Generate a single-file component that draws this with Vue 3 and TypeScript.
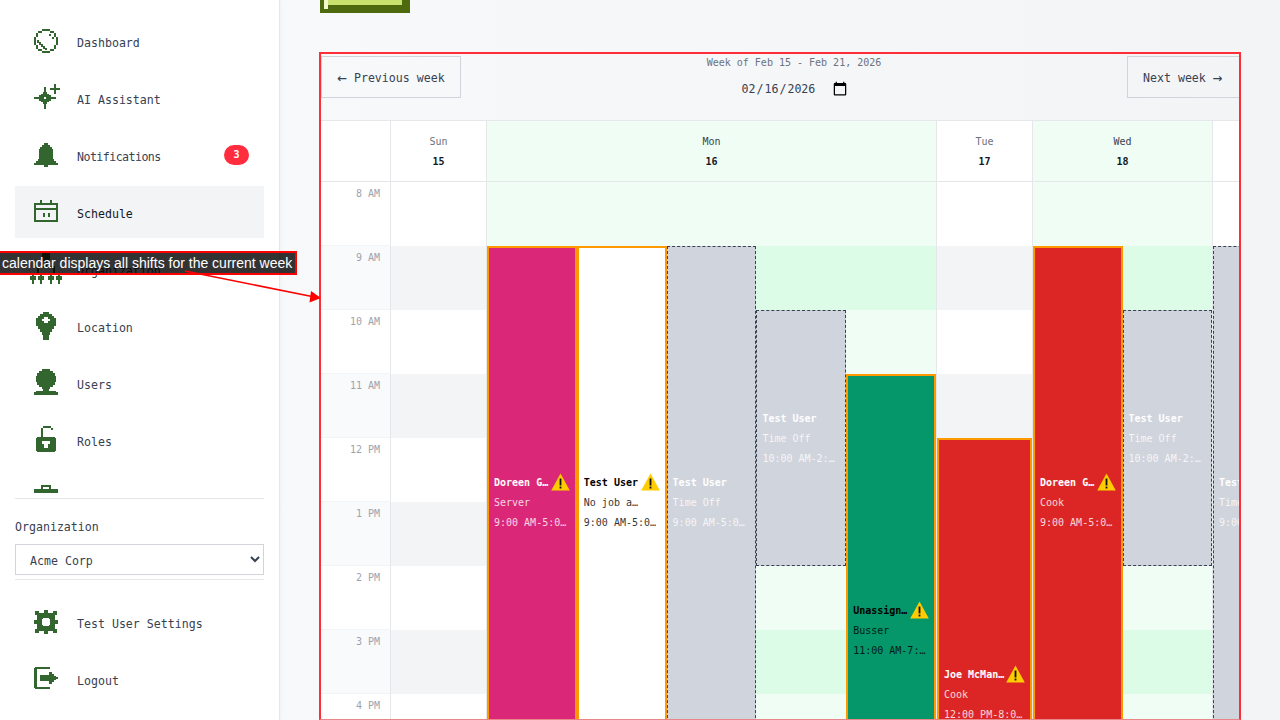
<script setup lang="ts">
type NavItem = { label: string; icon: string; badge?: number; active?: boolean; tight?: boolean }
type Shift = { name: string; role: string; time: string; kind: string; lane: number; start: number; hours: number; warn?: boolean }
type Day = { short: string; date: number; width: number; lanes: number; today?: boolean; shifts: Shift[] }

const club = (x: number) => `M${x} 19h2v-2h2v2h2v4h-2v4h-2v-4h-2z`

const icons: Record<string, string> = {
  dashboard:
    'M8 0h8v2h4v2h2v4h2v8h-2v4h-2v2h-4v2H8v-2H4v-2H2v-4H0V8h2V4h2V2h4z M8 2H16V4H20V8H22V16H20V20H16V22H8V20H4V16H2V8H4V4H8Z M3 11h2v2h2v2h2v2h2v2h2v2h-2v-1H9v-2H7v-2H5v-2H3z M15 5h2v2h-2z M18 8h2v2h-2z',
  ai: 'M10 1h2v5h1v2h2v1h2v2h5v2h-5v2h-2v1h-2v2h-1v5h-2v-5H9v-2H7v-1H5v-2H0v-2h5V9h2V8h2V6h1z M10 11h2v2h-2z M20 -2h2v4h4v2h-4v4h-2V4h-4V2h4z',
  bell: 'M10 0h4v2h2v2h2v2h1v10h1v2h2v2h2v2H0v-2h2v-2h2v-2h1V6h1V4h2V2h2z M10 22h4v2h-4z',
  calendar: 'M0 3h24v19H0z M2 5h20v15H2z M2 8h20v2H2z M6 0h2v3H6z M16 0h2v3h-2z M9 13h2v4H9z M14 13h2v4h-2z',
  org: `M8 -4h8v8H8z M11 4h2v5h-2z M3 9h18v2H3z M3 11h2v5H3z M19 11h2v5h-2z ${club(-4)} ${club(4)} ${club(14)} ${club(22)}`,
  location: 'M9 -2H15V0H18V2H20V4H22V12H20V15H18V18H16V21H15V26H9V21H8V18H6V15H4V12H2V4H4V2H6V0H9Z M10 3H14V5H16V7H14V9H10V7H8V5H10Z',
  users: 'M8 -2H16V0H19V2H21V5H22V11H21V14H19V16H16V18H8V16H5V14H3V11H2V5H3V2H5V0H8Z M9 18h6v2H9z M2 20H22V21H24V24H0V21H2Z',
  roles: 'M9 -2H17V0H9V9H7V0H9Z M17 0H19V2H17Z M3 9H21V10H22V23H21V24H3V23H2V10H3Z M8 13H16V16H14V20H10V16H8Z',
  case: 'M7 0H17V4H15V2H9V4H7Z M0 4H24V12H0Z',
  gear: 'M5 3H19V5H21V19H19V21H5V19H3V5H5Z M10 0H14V3H10Z M10 21H14V24H10Z M0 10H3V14H0Z M21 10H24V14H21Z M1 1H5V5H1Z M19 1H23V5H19Z M1 19H5V23H1Z M19 19H23V23H19Z M9 8h6v1h1v6h-1v1H9v-1H8V9h1z',
  logout: 'M1 0H16V2H3V20H16V22H1V21H0V1H1Z M6 8H15V14H6Z M15 5H18V7H20V9H22V10H24V12H22V13H20V15H18V17H15Z',
}

const navItems: NavItem[] = [
  { label: 'Dashboard', icon: 'dashboard' },
  { label: 'AI Assistant', icon: 'ai' },
  { label: 'Notifications', icon: 'bell', badge: 3, tight: true },
  { label: 'Schedule', icon: 'calendar', active: true },
  { label: 'Organization', icon: 'org' },
  { label: 'Location', icon: 'location' },
  { label: 'Users', icon: 'users' },
  { label: 'Roles', icon: 'roles' },
  { label: 'Jobs', icon: 'case' },
]

const footerItems: NavItem[] = [
  { label: 'Test User Settings', icon: 'gear' },
  { label: 'Logout', icon: 'logout' },
]

const hours = ['8 AM', '9 AM', '10 AM', '11 AM', '12 PM', '1 PM', '2 PM', '3 PM', '4 PM', '5 PM', '6 PM', '7 PM', '8 PM']

const timeOff = (lane: number, start: number, hrs: number, time: string): Shift => ({
  name: 'Test User',
  role: 'Time Off',
  time,
  kind: 'off',
  lane,
  start,
  hours: hrs,
})

const days: Day[] = [
  { short: 'Sun', date: 15, width: 96, lanes: 1, shifts: [] },
  {
    short: 'Mon',
    date: 16,
    width: 450,
    lanes: 5,
    today: true,
    shifts: [
      { name: 'Doreen Gonzalez', role: 'Server', time: '9:00 AM-5:00 PM', kind: 'pink', lane: 1, start: 1, hours: 8, warn: true },
      { name: 'Test User', role: 'No job assigned', time: '9:00 AM-5:00 PM', kind: 'white', lane: 2, start: 1, hours: 8, warn: true },
      timeOff(3, 1, 8, '9:00 AM-5:00 PM'),
      timeOff(4, 2, 4, '10:00 AM-2:00 PM'),
      { name: 'Unassigned', role: 'Busser', time: '11:00 AM-7:00 PM', kind: 'green', lane: 5, start: 3, hours: 8, warn: true },
    ],
  },
  {
    short: 'Tue',
    date: 17,
    width: 96,
    lanes: 1,
    shifts: [{ name: 'Joe McManus', role: 'Cook', time: '12:00 PM-8:00 PM', kind: 'red', lane: 1, start: 4, hours: 8, warn: true }],
  },
  {
    short: 'Wed',
    date: 18,
    width: 180,
    lanes: 2,
    today: true,
    shifts: [
      { name: 'Doreen Gonzalez', role: 'Cook', time: '9:00 AM-5:00 PM', kind: 'red', lane: 1, start: 1, hours: 8, warn: true },
      timeOff(2, 2, 4, '10:00 AM-2:00 PM'),
    ],
  },
  { short: 'Thu', date: 19, width: 180, lanes: 2, shifts: [timeOff(1, 1, 8, '9:00 AM-5:00 PM')] },
]

const shiftPlace = (s: Shift) => ({
  gridColumn: `${s.lane}`,
  gridRow: `${s.start + 1} / span ${s.hours}`,
})
</script>

<template>
  <div class="page">
    <aside class="sidebar">
      <nav class="nav">
        <a v-for="item in navItems" :key="item.label" class="nav-item" :class="{ active: item.active }">
          <svg class="icon" viewBox="0 0 24 24" shape-rendering="crispEdges">
            <path :d="icons[item.icon]" fill-rule="evenodd" />
          </svg>
          <span class="nav-label" :class="{ tight: item.tight }">{{ item.label }}</span>
          <span v-if="item.badge" class="badge">{{ item.badge }}</span>
        </a>
      </nav>
      <div class="org">
        <label for="org-select">Organization</label>
        <select id="org-select">
          <option>Acme Corp</option>
        </select>
      </div>
      <div class="footer-nav">
        <a v-for="item in footerItems" :key="item.label" class="nav-item">
          <svg class="icon" viewBox="0 0 24 24" shape-rendering="crispEdges">
            <path :d="icons[item.icon]" fill-rule="evenodd" />
          </svg>
          <span class="nav-label">{{ item.label }}</span>
        </a>
      </div>
    </aside>

    <main class="main">
      <div class="pixel-button"><div class="pixel-button__light"><div class="pixel-button__edge"></div></div></div>

      <section class="calendar">
        <header class="toolbar">
          <button type="button" class="week-btn prev"><span class="arrow">←</span> Previous week</button>
          <div class="week-info">
            <div class="week-label">Week of Feb 15 - Feb 21, 2026</div>
            <input class="date-input" type="date" value="2026-02-16" />
          </div>
          <button type="button" class="week-btn next">Next week <span class="arrow">→</span></button>
        </header>

        <div class="columns">
          <div class="col time-col">
            <div class="col-head"></div>
            <div v-for="hour in hours" :key="hour" class="time-cell">{{ hour }}</div>
          </div>

          <div
            v-for="day in days"
            :key="day.date"
            class="col"
            :class="{ today: day.today }"
            :style="{ width: day.width + 'px' }"
          >
            <div class="col-head">
              <div class="day-name">{{ day.short }}</div>
              <div class="day-date">{{ day.date }}</div>
            </div>
            <div class="day-body" :style="{ gridTemplateColumns: `repeat(${day.lanes}, 1fr)` }">
              <div
                v-for="(hour, i) in hours"
                :key="hour"
                class="hour-cell"
                :class="{ odd: i % 2 === 1 }"
                :style="{ gridRow: i + 1 }"
              ></div>
              <div
                v-for="shift in day.shifts"
                :key="shift.kind + shift.lane"
                class="shift"
                :class="shift.kind"
                :style="shiftPlace(shift)"
              >
                <div class="shift-top">
                  <span class="shift-name">{{ shift.name }}</span>
                  <svg v-if="shift.warn" class="warn" viewBox="0 0 19 18">
                    <path d="M9.5 0.5 18.8 17.5H0.2Z" fill="#ffcc00" />
                    <rect x="8.6" y="5.5" width="1.8" height="7" fill="#111" />
                    <rect x="8.6" y="13.6" width="1.8" height="1.9" fill="#111" />
                  </svg>
                </div>
                <div class="shift-sub shift-role">{{ shift.role }}</div>
                <div class="shift-sub">{{ shift.time }}</div>
              </div>
            </div>
          </div>
        </div>
      </section>
    </main>

    <!-- tour callout lies over the sidebar -->
    <div class="callout">calendar displays all shifts for the current week</div>
    <svg class="callout-arrow" width="340" height="310" viewBox="0 0 340 310">
      <line x1="185" y1="271" x2="312" y2="296.5" stroke="#ff0000" stroke-width="1.6" />
      <path d="M321 298 309.5 302.5 311 291Z" fill="#ff0000" />
    </svg>
  </div>
</template>

<style scoped>
.page {
  display: flex;
  width: 1280px;
  height: 720px;
  overflow: hidden;
  position: relative;
  font-family: 'DejaVu Sans Mono', monospace;
  background: linear-gradient(90deg, #f9fafb, #f3f4f6);
}

.sidebar {
  flex: 0 0 280px;
  box-sizing: border-box;
  height: 720px;
  padding: 0 15px;
  background: #fff;
  border-right: 1px solid #e5e7eb;
  box-shadow: 1px 0 3px rgba(0, 0, 0, 0.03);
}

.nav {
  height: 493px;
  overflow: hidden;
  padding-top: 15px;
  box-sizing: border-box;
  display: flex;
  flex-direction: column;
  gap: 5px;
}

.nav-item {
  flex: 0 0 52px;
  height: 52px;
  box-sizing: border-box;
  display: flex;
  align-items: center;
  gap: 19px;
  padding: 0 15px 0 19px;
  font-size: 11.6px;
  color: #374151;
}

.nav-item.active {
  background: #f3f4f6;
  color: #111827;
}

.nav-label {
  padding-top: 4px;
}

.nav-label.tight {
  letter-spacing: -0.54px;
}

.icon {
  width: 24px;
  height: 24px;
  flex: none;
  overflow: visible;
  fill: #33662f;
}

.badge {
  margin-left: auto;
  width: 25px;
  height: 20px;
  line-height: 20px;
  border-radius: 10px;
  text-align: center;
  background: #ff2d3d;
  color: #fff;
  font-size: 10px;
  font-weight: 700;
}

.org {
  margin-top: 5px;
  height: 82px;
  box-sizing: border-box;
  padding-top: 21px;
  border-top: 1px solid #e5e7eb;
  border-bottom: 1px solid #e5e7eb;
}

.org label {
  display: block;
  height: 24px;
  line-height: 14px;
  font-size: 11.6px;
  color: #374151;
}

.org select {
  display: block;
  width: 100%;
  height: 31px;
  padding: 3px 0 0 10px;
  background: #fff;
  border: 1px solid #d1d5db;
  border-radius: 0;
  font-family: inherit;
  font-size: 11.6px;
  color: #374151;
}

.footer-nav {
  padding-top: 16px;
  display: flex;
  flex-direction: column;
  gap: 5px;
}

.main {
  flex: 1;
  min-width: 0;
  padding: 0 39px;
}

.pixel-button {
  width: 90px;
  height: 13px;
  margin-left: 1px;
  padding: 0 8px 0 4px;
  box-sizing: border-box;
  background: #4d6a0e;
}

.pixel-button__light {
  height: 5px;
  background: #c9e16d;
}

.pixel-button__edge {
  width: 4px;
  height: 9px;
  background: #f0f8cc;
}

.calendar {
  margin-top: 39px;
  width: 922px;
  height: 668px;
  box-sizing: border-box;
  border: 2px solid #ff2d35;
  border-bottom: 1px solid #e8868a;
  overflow: hidden;
}

.toolbar {
  display: flex;
  align-items: flex-start;
  height: 66px;
  box-sizing: border-box;
  padding-top: 2px;
}

.week-btn {
  flex: none;
  height: 42px;
  padding: 2px 0 0;
  border: 1px solid #d1d5db;
  background: transparent;
  font-family: inherit;
  font-size: 11.6px;
  line-height: 14px;
  color: #374151;
  white-space: nowrap;
}

.arrow {
  display: inline-block;
  font-size: 16px;
  line-height: 14px;
  vertical-align: top;
}

.prev {
  width: 140px;
}

.next {
  width: 113px;
  margin-right: -1px;
  text-align: left;
  padding-left: 15px;
}

.week-info {
  flex: 1;
  text-align: center;
}

.week-label {
  height: 14px;
  line-height: 14px;
  font-size: 10px;
  color: #6b7280;
}

.date-input {
  display: block;
  margin: 7px auto 0;
  width: 107px;
  height: 24px;
  padding: 0;
  border: 0;
  background: transparent;
  font-family: inherit;
  font-size: 11.6px;
  color: #374151;
}

.date-input::-webkit-calendar-picker-indicator {
  width: 16px;
  height: 16px;
  padding: 0;
  margin: 0;
}

.columns {
  display: flex;
  border-top: 1px solid #e5e7eb;
}

.col {
  flex: none;
  box-sizing: border-box;
  border-right: 1px solid #e5e7eb;
}

.time-col {
  width: 70px;
}

.col-head {
  height: 61px;
  box-sizing: border-box;
  border-bottom: 1px solid #e5e7eb;
  padding-top: 11px;
  text-align: center;
  background: #fff;
}

.today .col-head {
  background: #f0fdf4;
}

.day-name {
  height: 20px;
  line-height: 20px;
  font-size: 10px;
  color: #6b7280;
}

.today .day-name {
  color: #374151;
}

.day-date {
  height: 20px;
  line-height: 20px;
  font-size: 10px;
  font-weight: 700;
  color: #111827;
}

.time-cell {
  height: 64px;
  box-sizing: border-box;
  padding: 5px 10px 0 0;
  line-height: 14px;
  text-align: right;
  font-size: 10px;
  color: #9ca3af;
  background: #fff;
  border-bottom: 1px solid #f3f4f6;
}

.time-cell:nth-child(odd) {
  background: #f9fafb;
}

.day-body {
  display: grid;
  grid-auto-rows: 64px;
}

.hour-cell {
  grid-column: 1 / -1;
  background: #fff;
}

.hour-cell.odd {
  background: #f3f4f6;
}

.today .hour-cell {
  background: #f0fdf4;
}

.today .hour-cell.odd {
  background: #dcfce7;
}

.shift {
  min-width: 0;
  box-sizing: border-box;
  display: flex;
  flex-direction: column;
  justify-content: center;
  padding: 2px 5px 0;
  border: 2px solid #ff9900;
  font-size: 10px;
  line-height: 20px;
  color: #fff;
}

.pink {
  background: #db2777;
}

.red {
  background: #dc2626;
}

.green {
  background: #059669;
  color: #000;
}

.white {
  background: #fff;
  color: #000;
}

.off {
  background: #d0d4dc;
  border: 1px dashed #374151;
}

.shift-top {
  display: flex;
  align-items: center;
  gap: 1.5px;
  height: 20px;
}

.shift-name {
  min-width: 0;
  overflow: hidden;
  white-space: nowrap;
  text-overflow: ellipsis;
  font-weight: 700;
}

.warn {
  flex: none;
  width: 19px;
  height: 18px;
  margin: -2px 0 0 auto;
}

.shift-sub {
  overflow: hidden;
  white-space: nowrap;
  text-overflow: ellipsis;
  opacity: 0.8;
}

.shift-role {
  max-width: 56px;
}

.callout {
  position: absolute;
  left: 0;
  top: 251px;
  width: 297px;
  height: 24px;
  box-sizing: border-box;
  padding-left: 2px;
  border: 2px solid #ff0000;
  border-left: 0;
  background: rgba(0, 0, 0, 0.8);
  color: #fff;
  font: 14px/20px 'Liberation Sans', Arial, sans-serif;
  white-space: nowrap;
  overflow: hidden;
}

.callout-arrow {
  position: absolute;
  left: 0;
  top: 0;
  pointer-events: none;
}
</style>

<style>
html,
body {
  margin: 0;
  overflow: hidden;
}
</style>
